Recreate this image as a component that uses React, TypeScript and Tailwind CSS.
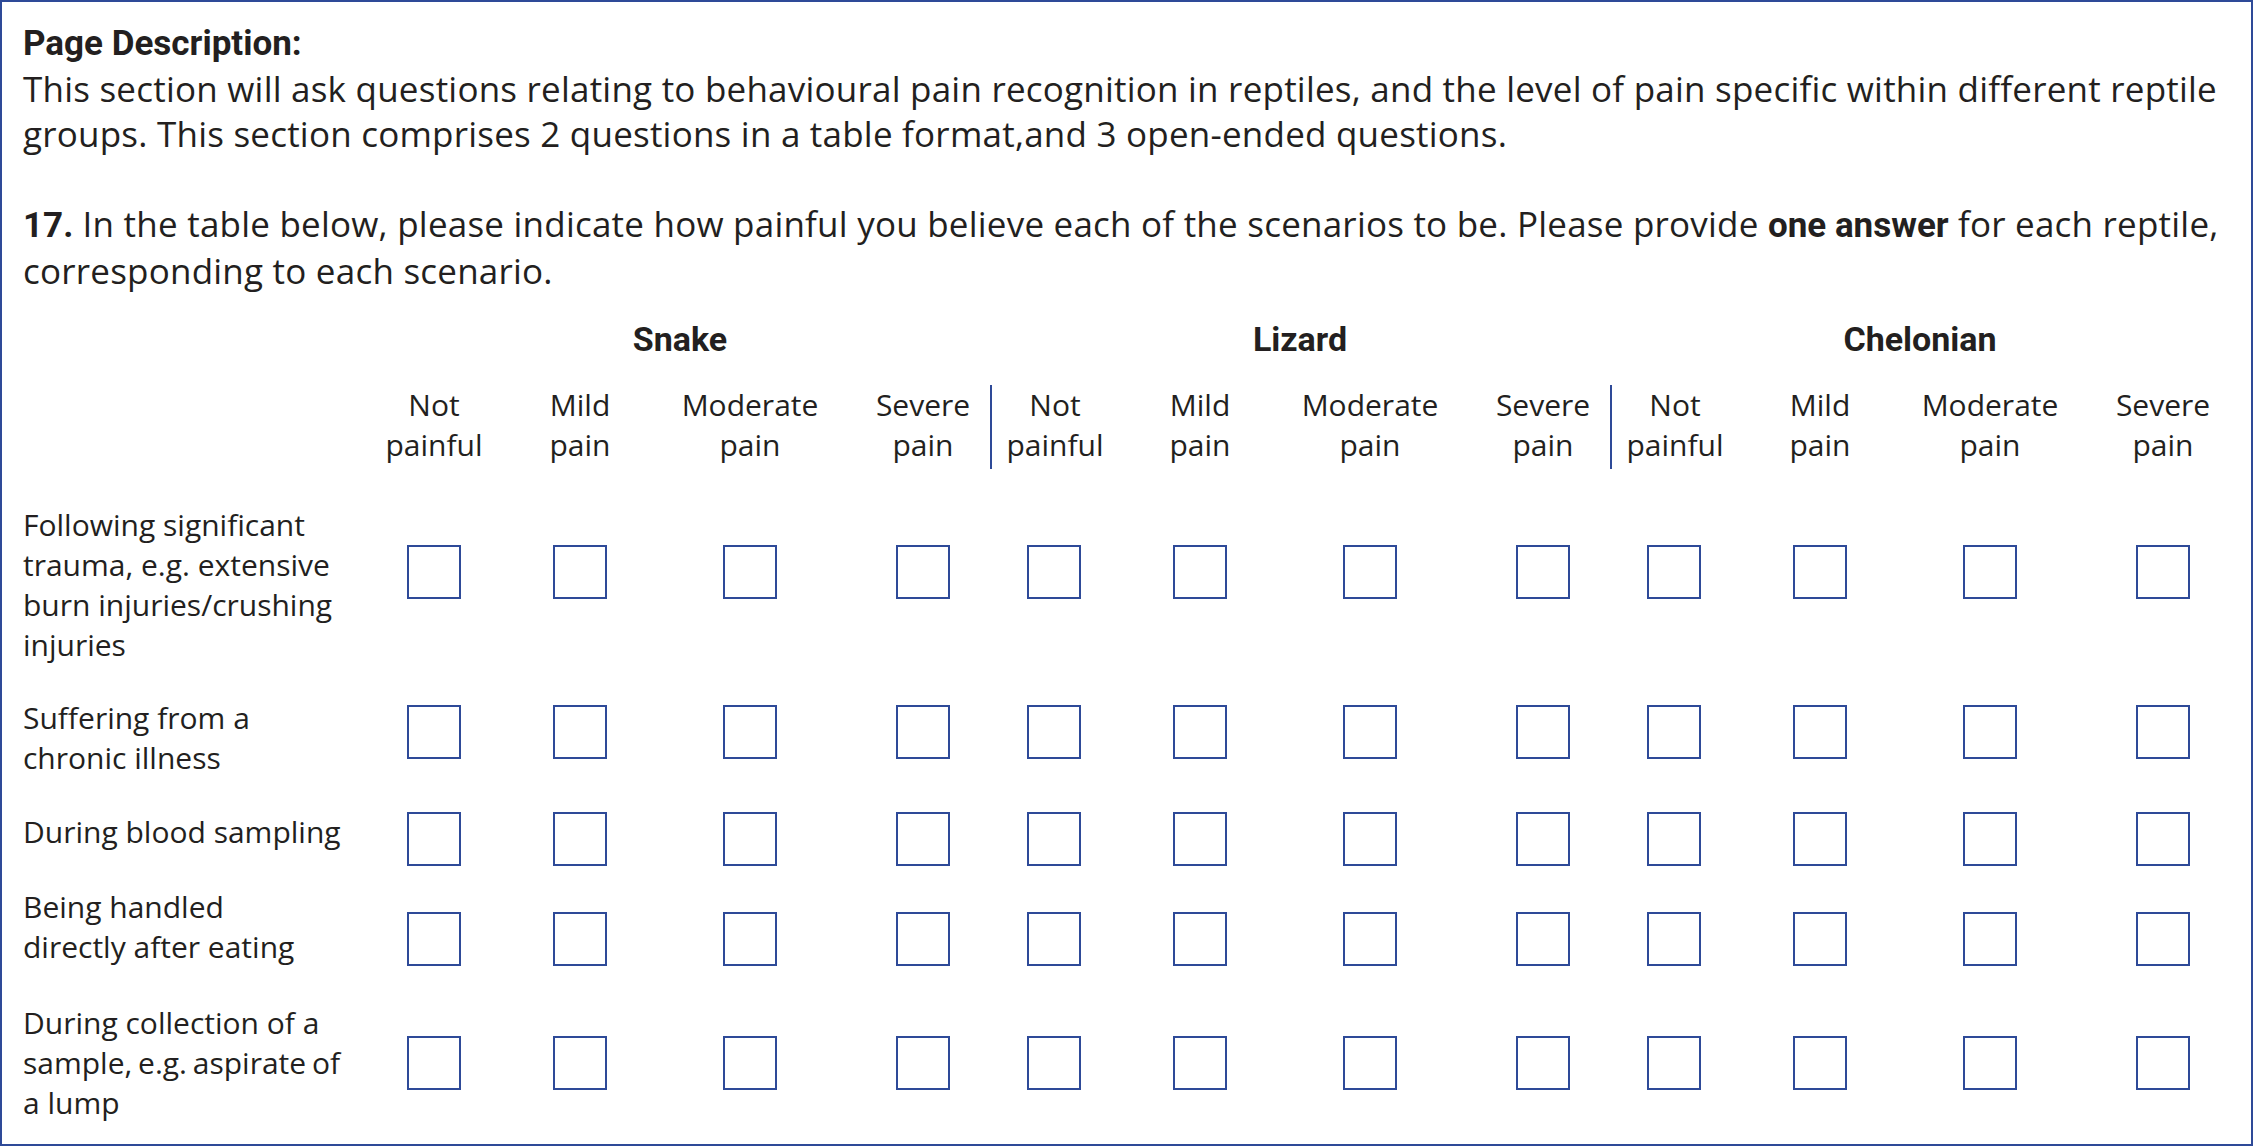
import React from "react";

const groups = ["Snake", "Lizard", "Chelonian"];

type Row = { lines: string[]; rowMt: string; cbMt: string; tight?: number };

const rows: Row[] = [
  {
    lines: ["Following significant", "trauma, e.g. extensive", "burn injuries/crushing", "injuries"],
    rowMt: "mt-[36px]",
    cbMt: "mt-[40px]",
  },
  { lines: ["Suffering from a", "chronic illness"], rowMt: "mt-[33px]", cbMt: "mt-[7px]" },
  { lines: ["During blood sampling"], rowMt: "mt-[34px]", cbMt: "mt-0" },
  { lines: ["Being handled", "directly after eating"], rowMt: "mt-[21px]", cbMt: "mt-[25px]" },
  {
    lines: ["During collection of a", "sample, e.g. aspirate of", "a lump"],
    rowMt: "mt-[36px]",
    cbMt: "mt-[33px]",
    tight: 1,
  },
];

const colCls = ["", "", "", "pl-[18px]"];

function Checkbox({ mt }: { mt: string }) {
  return <div className={`w-[54px] h-[54px] border-2 border-[#2e4a98] bg-white ${mt}`} />;
}

function HeaderGroup({ divider }: { divider: boolean }) {
  const labels = [
    ["Not", "painful"],
    ["Mild", "pain"],
    ["Moderate", "pain"],
    ["Severe", "pain"],
  ];
  return (
    <div className="grid grid-cols-[128px_164px_176px_152px]">
      {labels.map((l, i) => (
        <div
          key={i}
          className={`h-[84px] text-center text-[30px] leading-[40px] ${colCls[i]} ${
            i === 0 && divider ? "border-l-2 border-[#2e4a98]" : ""
          }`}
        >
          {l[0]}
          <br />
          {l[1]}
        </div>
      ))}
    </div>
  );
}

function CheckGroup({ mt }: { mt: string }) {
  return (
    <div className="grid grid-cols-[128px_164px_176px_152px] items-start">
      {[0, 1, 2, 3].map((i) => (
        <div key={i} className={`flex justify-center ${colCls[i]}`}>
          <Checkbox mt={mt} />
        </div>
      ))}
    </div>
  );
}

export default function App() {
  return (
    <div className="w-[2253px] h-[1146px] border-2 border-[#2e4a98] bg-white pl-[21px] pr-[21px] pt-[19px] text-[#231f20] font-['Open_Sans',sans-serif] overflow-hidden">
      <div className="font-['Roboto',sans-serif] font-bold text-[35px] leading-[45px]">Page Description:</div>
      <div className="text-[35px] leading-[45px] tracking-[0.22px]">
        <div className="whitespace-nowrap">
          This section will ask questions relating to behavioural pain recognition in reptiles, and the level of pain
          specific within different reptile
        </div>
        <div className="whitespace-nowrap">
          groups. This section comprises 2 questions in a table format,and 3 open-ended questions.
        </div>
        <div className="h-[45px]" />
        <div className="whitespace-nowrap">
          <span className="font-['Roboto',sans-serif] font-bold tracking-normal">17.</span> In the table below, please
          indicate how painful you believe each of the scenarios to be. Please provide{" "}
          <span className="font-['Roboto',sans-serif] font-bold tracking-normal">one answer</span> for each reptile,
        </div>
        <div className="whitespace-nowrap">corresponding to each scenario.</div>
      </div>

      <div className="mt-[26px] grid grid-cols-[347px_620px_620px_620px]">
        <div />
        {groups.map((g) => (
          <div key={g} className="text-center font-['Roboto',sans-serif] font-bold text-[34px] leading-[40px]">
            {g}
          </div>
        ))}
      </div>

      <div className="mt-[26px] grid grid-cols-[347px_620px_620px_620px]">
        <div />
        <HeaderGroup divider={false} />
        <HeaderGroup divider={true} />
        <HeaderGroup divider={true} />
      </div>

      {rows.map((r, idx) => (
        <div key={idx} className={`grid grid-cols-[347px_620px_620px_620px] items-start ${r.rowMt}`}>
          <div className="text-[30px] leading-[40px]">
            {r.lines.map((l, j) => (
              <div key={j} className={`whitespace-nowrap ${r.tight && j === 1 ? "[word-spacing:-2px]" : ""}`}>
                {l}
              </div>
            ))}
          </div>
          <CheckGroup mt={r.cbMt} />
          <CheckGroup mt={r.cbMt} />
          <CheckGroup mt={r.cbMt} />
        </div>
      ))}
    </div>
  );
}
